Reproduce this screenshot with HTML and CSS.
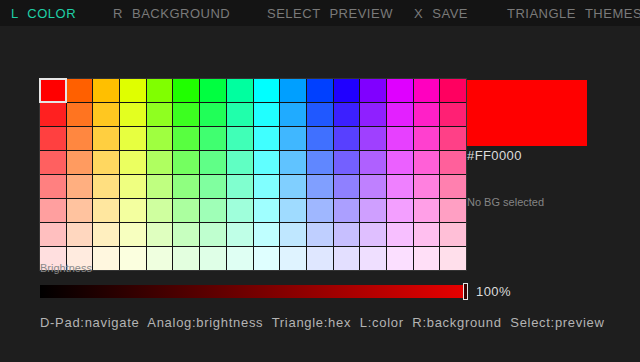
FILE: index.html
```html
<!DOCTYPE html>
<html>
<head>
<meta charset="utf-8">
<link rel="stylesheet" href="styles.css">
</head>
<body>
<header class="topbar">
  <span class="tab tab-active">L COLOR</span>
  <span class="tab">R BACKGROUND</span>
  <span class="tab">SELECT PREVIEW</span>
  <span class="tab">X SAVE</span>
  <span class="tab">TRIANGLE THEMES</span>
</header>
<main class="content">
  <section class="picker">
    <div class="grid" id="grid"></div>
    <aside class="side">
      <div class="swatch"></div>
      <div class="hex">#FF0000</div>
      <div class="bg-note">No BG selected</div>
    </aside>
  </section>
  <div class="bright-label">Brightness</div>
  <div class="bright-row">
    <div class="bar"><span class="handle"></span></div>
    <span class="pct">100%</span>
  </div>
  <footer class="help">D-Pad:navigate  Analog:brightness  Triangle:hex  L:color  R:background  Select:preview</footer>
</main>
<script src="script.js"></script>
</body>
</html>
```
FILE: styles.css
```css
html, body {
  margin: 0;
  padding: 0;
  background: #1e1e1e;
  font-family: "Liberation Sans", Arial, sans-serif;
  width: 640px;
  height: 362px;
  overflow: hidden;
}
.topbar {
  height: 26px;
  background: #141414;
  display: grid;
  grid-template-columns: 102px 154px 147px 93px auto;
  align-items: center;
  padding-left: 11px;
  white-space: nowrap;
  overflow: hidden;
}
.tab {
  font-size: 13px;
  letter-spacing: 0.5px;
  word-spacing: 5px;
  color: #7a7a7a;
}
.tab-active {
  color: #1fcfa6;
}
.content {
  padding: 53px 0 0 40px;
}
.picker {
  display: flex;
  align-items: flex-start;
  gap: 1px;
}
.grid {
  width: 426px;
  height: 191px;
  display: grid;
  grid-template-columns: repeat(16, 1fr);
  grid-template-rows: repeat(8, 1fr);
  gap: 1px;
  background: #141414;
  box-shadow: 0 0 0 1px #333;
}
.cell {
  position: relative;
}
.cell.selected {
  outline: 2px solid #e6e6e6;
  outline-offset: -1px;
  z-index: 1;
}
.side {
  display: flex;
  flex-direction: column;
  padding-top: 1px;
}
.swatch {
  width: 120px;
  height: 66px;
  background: #ff0000;
}
.hex {
  margin-top: 2px;
  font-size: 13px;
  line-height: 15px;
  letter-spacing: 0.4px;
  color: #dcdcdc;
}
.bg-note {
  margin-top: 33px;
  font-size: 11px;
  line-height: 13px;
  color: #858585;
}
.bright-label {
  margin-top: -8px;
  position: relative;
  font-size: 11px;
  line-height: 12px;
  color: #8a8a8a;
  height: 12px;
}
.bright-row {
  margin-top: 9px;
  display: flex;
  align-items: center;
  height: 17px;
}
.bar {
  width: 426px;
  height: 13px;
  background: linear-gradient(to right, #000000, #e80000);
  display: flex;
  justify-content: flex-end;
  align-items: center;
}
.handle {
  width: 3px;
  height: 15px;
  border: 1px solid #e6e6e6;
  background: #3a0000;
  margin-right: -2px;
}
.pct {
  margin-left: 10px;
  font-size: 13px;
  letter-spacing: 0.4px;
  color: #dcdcdc;
}
.help {
  margin-top: 15px;
  font-size: 13px;
  line-height: 15px;
  letter-spacing: 0.7px;
  color: #b4b4b4;
  white-space: pre;
}
```
FILE: script.js
```js
var grid = document.getElementById('grid');
for (var r = 0; r < 8; r++) {
  for (var c = 0; c < 16; c++) {
    var d = document.createElement('div');
    d.className = 'cell' + (r === 0 && c === 0 ? ' selected' : '');
    d.style.background = 'hsl(' + (c * 22.5) + ', 100%, ' + (50 + r * 6.25) + '%)';
    grid.appendChild(d);
  }
}
```
